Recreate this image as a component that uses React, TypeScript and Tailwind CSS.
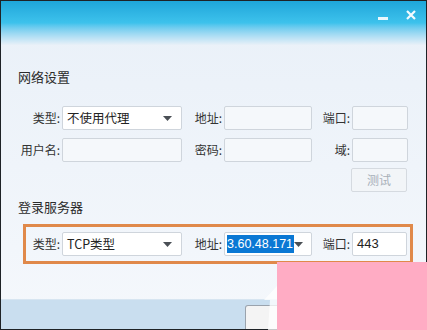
import { ReactElement, ReactNode } from 'react'

const font = { fontFamily: '"Microsoft YaHei", "Noto Sans CJK SC", "Noto Sans", sans-serif' }
const latin = { fontFamily: '"Liberation Sans", Arial, sans-serif' }

const Arrow = (): ReactElement => (
	<svg width="9" height="5" viewBox="0 0 9 5" className="shrink-0">
		<path d="M0 0 H9 L4.5 5 Z" fill="#4a4f55" />
	</svg>
)

const Label = ({ w, children }: { w: string; children: ReactNode }): ReactElement => (
	<span className={`${w} shrink-0 text-right text-[12px] text-[#333] pr-[2px] leading-none`}>{children}</span>
)

const Field = ({ w, children, white }: { w: string; children?: ReactNode; white?: boolean }): ReactElement => (
	<div
		className={`${w} h-[24px] shrink-0 flex items-center overflow-hidden border border-[#cfd5dc] rounded-[2px] px-[4px] text-[12px] text-[#222] ${
			white ? 'bg-white' : 'bg-[#f5f8fb]'
		}`}
	>
		{children}
	</div>
)

const App = (): ReactElement => (
	<div className="relative w-[427px] h-[330px] overflow-hidden" style={font}>
		<div className="w-full h-full flex flex-col border border-[#1e2226] bg-gradient-to-b from-[#e9f0f8] to-[#f5f8fc]">
			{/* title bar */}
			<div className="h-[44px] shrink-0 flex justify-end items-start gap-[18px] pr-[10px] pt-[9px] bg-gradient-to-b from-[#1ea6da] via-[#3dc2ec] to-[#e9f0f8]">
				<div className="w-[10px] h-[3px] bg-white/90 mt-[7px]" />
				<svg width="10" height="10" viewBox="0 0 10 10">
					<path d="M1 1 L9 9 M9 1 L1 9" stroke="#f4fbff" strokeWidth="2.2" />
				</svg>
			</div>

			{/* 网络设置 */}
			<div className="pl-[17px] pt-[24px] text-[13px] leading-[16px] text-[#2b2b2b]">网络设置</div>

			<div className="flex flex-col gap-[8px] pl-[17px] mt-[21px]">
				<div className="flex items-center">
					<Label w="w-[44px]">类型:</Label>
					<Field w="w-[120px]" white>
						<span className="flex-1 text-[12.5px]">不使用代理</span>
						<span className="pr-[5px]">
							<Arrow />
						</span>
					</Field>
					<Label w="w-[42px]">地址:</Label>
					<Field w="w-[88px]" />
					<Label w="w-[40px]">端口:</Label>
					<Field w="w-[56px]" />
				</div>
				<div className="flex items-center">
					<Label w="w-[44px]">用户名:</Label>
					<Field w="w-[120px]" />
					<Label w="w-[42px]">密码:</Label>
					<Field w="w-[88px]" />
					<Label w="w-[40px]">域:</Label>
					<Field w="w-[56px]" />
				</div>
				<div className="flex justify-end pr-[19px] -mt-[2px]">
					<div className="w-[56px] h-[24px] flex items-center justify-center border border-[#d5dae0] rounded-[2px] bg-[#f2f5f8] text-[12px] text-[#a8b0b8]">
						测试
					</div>
				</div>
			</div>

			{/* 登录服务器 */}
			<div className="pl-[17px] pt-[7px] text-[13px] leading-[16px] text-[#2b2b2b]">登录服务器</div>

			<div className="ml-[22px] mt-[9px] w-[390px] h-[40px] border-[3px] border-[#e0894a] flex items-center">
				<Label w="w-[36px]">类型:</Label>
				<Field w="w-[120px]" white>
					<span className="flex-1 text-[12.5px]">TCP类型</span>
					<span className="pr-[5px]">
						<Arrow />
					</span>
				</Field>
				<Label w="w-[42px]">地址:</Label>
				<Field w="w-[88px]" white>
					<span
						className="-ml-[2px] bg-[#0a78d4] text-white text-[12.5px] leading-[18px] pr-[1px] whitespace-nowrap"
						style={latin}
					>
						3.60.48.171
					</span>
					<span className="ml-auto pr-[4px]">
						<Arrow />
					</span>
				</Field>
				<Label w="w-[40px]">端口:</Label>
				<Field w="w-[55px]" white>
					<span className="text-[13px]" style={latin}>
						443
					</span>
				</Field>
			</div>

			<div className="flex-1" />

			{/* bottom bar */}
			<div className="h-[30px] shrink-0 bg-[#c9deef] border-t border-[#d7e5f1] flex items-end pl-[244px]">
				<div className="w-[60px] h-[24px] border border-[#9aa3ad] border-b-0 rounded-t-[3px] bg-[#f4f4f4]" />
			</div>
		</div>

		{/* watermark */}
		<div className="absolute left-[277px] top-[262px] right-0 bottom-0 bg-[#ffacc4]" />
		<svg className="absolute left-[262px] top-[286px]" width="16" height="44" viewBox="0 0 16 44">
			<path d="M15 0 L2 14 L8 14 L6 44 L15 44 Z" fill="#ffffff" opacity="0.75" />
		</svg>
	</div>
)

export default App
